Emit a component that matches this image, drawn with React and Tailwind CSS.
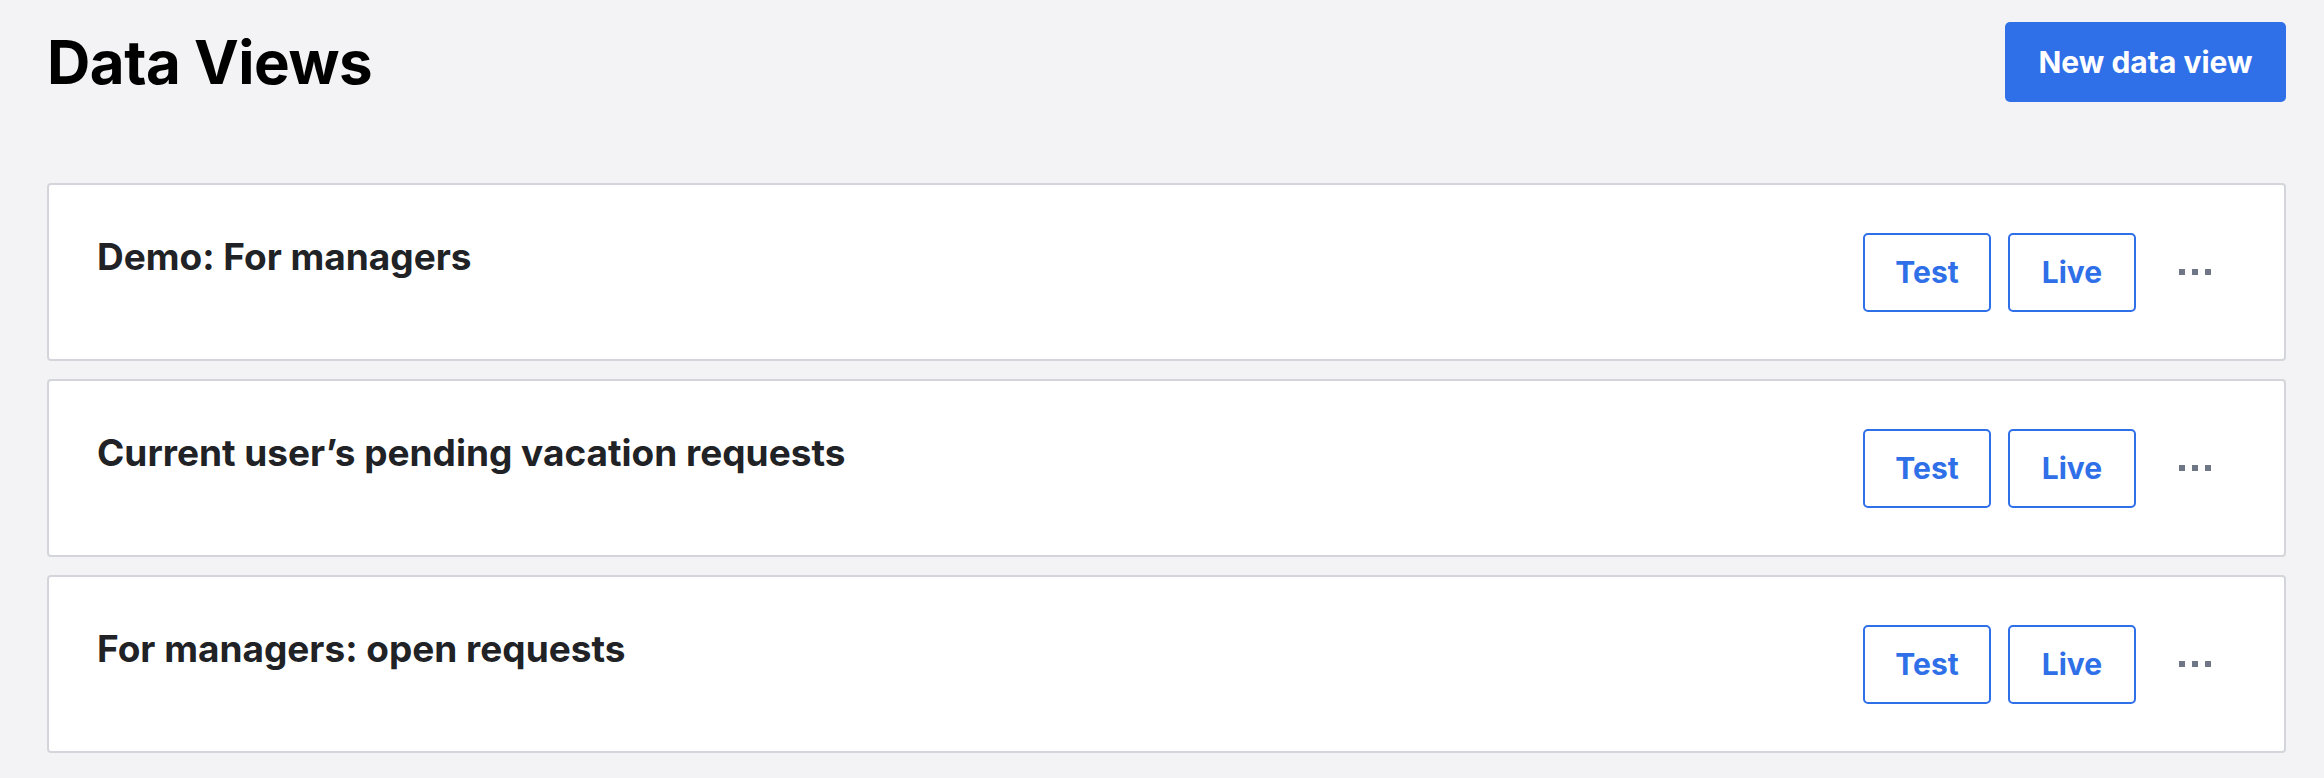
import React from "react";

const views = [
  "Demo: For managers",
  "Current user\u2019s pending vacation requests",
  "For managers: open requests",
];

function Dots() {
  return (
    <div className="ml-[26px] flex items-center gap-[7px]">
      <span className="block h-[6px] w-[6px] bg-[#6f7685]" />
      <span className="block h-[6px] w-[6px] bg-[#6f7685]" />
      <span className="block h-[6px] w-[6px] bg-[#6f7685]" />
    </div>
  );
}

function OutlineButton({ children }) {
  return (
    <button className="flex h-[79px] w-[128px] items-center justify-center rounded-[5px] border-2 border-[#2f6fe8] bg-white text-[30px] font-bold text-[#2f6fe8]">
      {children}
    </button>
  );
}

function Card({ title }) {
  return (
    <div className="flex h-[178px] items-center justify-between rounded-[4px] border-2 border-[#d3d5da] bg-white pl-[48px] pr-[73px]">
      <h2 className="self-start pt-[50px] text-[37px] font-bold leading-[43px] text-[#202226]">
        {title}
      </h2>
      <div className="flex items-center gap-[17px]">
        <OutlineButton>Test</OutlineButton>
        <OutlineButton>Live</OutlineButton>
        <Dots />
      </div>
    </div>
  );
}

export default function App() {
  return (
    <div
      className="min-h-[778px] w-full bg-[#f3f3f5] pb-[25px] pl-[47px] pr-[38px] pt-[22px]"
      style={{ fontFamily: "Inter, 'Noto Sans', sans-serif" }}
    >
      <header className="flex h-[80px] items-center justify-between">
        <h1 className="text-[60px] font-bold leading-[72px] tracking-[-0.5px] text-black">
          Data Views
        </h1>
        <button className="flex h-[80px] w-[281px] items-center justify-center rounded-[5px] bg-[#2f6fe8] text-[30px] font-bold text-white">
          New data view
        </button>
      </header>
      <main className="mt-[81px] flex flex-col gap-[18px]">
        {views.map((v) => (
          <Card key={v} title={v} />
        ))}
      </main>
    </div>
  );
}
